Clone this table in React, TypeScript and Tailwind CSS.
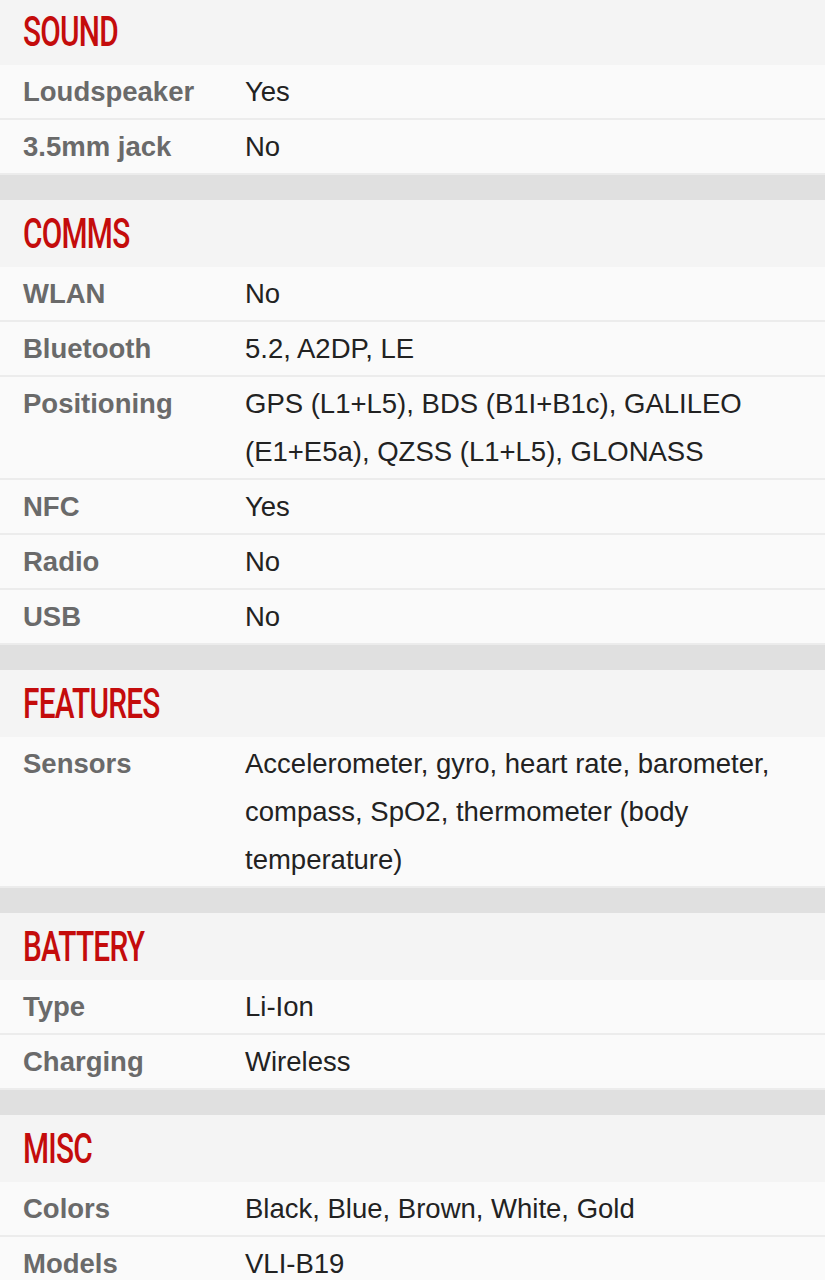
import React from "react"

type Row = { label: string; value: string }
type Section = { title: string; rows: Row[] }

const sections: Section[] = [
  {
    title: "SOUND",
    rows: [
      { label: "Loudspeaker", value: "Yes" },
      { label: "3.5mm jack", value: "No" },
    ],
  },
  {
    title: "COMMS",
    rows: [
      { label: "WLAN", value: "No" },
      { label: "Bluetooth", value: "5.2, A2DP, LE" },
      { label: "Positioning", value: "GPS (L1+L5), BDS (B1I+B1c), GALILEO (E1+E5a), QZSS (L1+L5), GLONASS" },
      { label: "NFC", value: "Yes" },
      { label: "Radio", value: "No" },
      { label: "USB", value: "No" },
    ],
  },
  {
    title: "FEATURES",
    rows: [
      { label: "Sensors", value: "Accelerometer, gyro, heart rate, barometer, compass, SpO2, thermometer (body temperature)" },
    ],
  },
  {
    title: "BATTERY",
    rows: [
      { label: "Type", value: "Li-Ion" },
      { label: "Charging", value: "Wireless" },
    ],
  },
  {
    title: "MISC",
    rows: [
      { label: "Colors", value: "Black, Blue, Brown, White, Gold" },
      { label: "Models", value: "VLI-B19" },
    ],
  },
]

export default function App() {
  return (
    <div className="w-[825px] h-[1280px] bg-[#fafafa] font-['Liberation_Sans',Arial,sans-serif] overflow-hidden">
      <div className="-mt-[2px]">
        {sections.map((section, i) => (
          <div key={section.title}>
            {i > 0 && <div className="h-[25px] bg-[#e0e0e0]" />}
            <div className="h-[67px] bg-[#f4f4f4] flex items-center px-[23px]">
              <h2 className="inline-block origin-left scale-x-[0.71] font-['Roboto',sans-serif] text-[42px] leading-none font-medium text-[#c40c0c] tracking-tight">
                {section.title}
              </h2>
            </div>
            {section.rows.map((row) => (
              <div key={row.label} className="flex py-[2.5px] bg-[#fafafa] border-b-2 border-[#ececec]">
                <div className="w-[245px] shrink-0 pl-[23px] text-[27.5px] leading-[48px] font-bold text-[#6a6a6a]">
                  {row.label}
                </div>
                <div className="flex-1 pr-[20px] text-[27.5px] leading-[48px] text-[#222]">{row.value}</div>
              </div>
            ))}
          </div>
        ))}
      </div>
    </div>
  )
}
